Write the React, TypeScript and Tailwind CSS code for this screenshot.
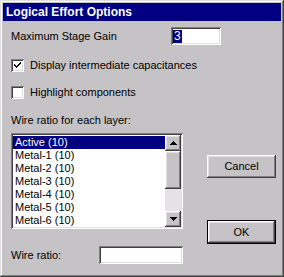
import React from "react";

const raised =
  "shadow-[inset_-1px_-1px_#404040,inset_1px_1px_#ffffff,inset_-2px_-2px_#808080,inset_2px_2px_#dfdfdf]";
const sunken =
  "shadow-[inset_1px_1px_#808080,inset_-1px_-1px_#ffffff,inset_2px_2px_#404040,inset_-2px_-2px_#dfdfdf]";

function Checkbox({ checked }: { checked?: boolean }) {
  return (
    <div className={`w-[13px] h-[13px] bg-white ${sunken} flex items-center justify-center`}>
      {checked && (
        <svg width="7" height="7" viewBox="0 0 7 7" shapeRendering="crispEdges">
          <path d="M0 2h1v1h1v1h1v-1h1v-1h1v-1h1v-1h1v2h-1v1h-1v1h-1v1h-1v1h-1v-1h-1v-1h-1z" fill="#000" />
          <path d="M0 3h1v1h1v1h1v-1h1v-1h1v-1h1v-1h1v1h-1v1h-1v1h-1v1h-1v1h-1v-1h-1v-1h-1z" fill="#000" />
        </svg>
      )}
    </div>
  );
}

function Arrow({ up }: { up?: boolean }) {
  return (
    <svg width="7" height="4" viewBox="0 0 7 4" shapeRendering="crispEdges">
      {up ? (
        <path d="M3 0h1v1h1v1h1v1h1v1h-7v-1h1v-1h1v-1h1z" fill="#000" />
      ) : (
        <path d="M0 0h7v1h-1v1h-1v1h-1v1h-1v-1h-1v-1h-1v-1h-1z" fill="#000" />
      )}
    </svg>
  );
}

const items = ["Active (10)", "Metal-1 (10)", "Metal-2 (10)", "Metal-3 (10)", "Metal-4 (10)", "Metal-5 (10)", "Metal-6 (10)"];

export default function App() {
  return (
    <div
      className="w-[284px] h-[277px] bg-[#c6c3c6] p-[3px] flex flex-col text-[11px] text-black shadow-[inset_-1px_-1px_#404040,inset_1px_1px_#dfdfdf,inset_-2px_-2px_#808080,inset_2px_2px_#ffffff]"
      style={{ fontFamily: '"Liberation Sans", Arial, sans-serif' }}
    >
      <div className="h-[18px] bg-[#000080] text-white font-bold text-[12px] leading-[18px] pl-[3px]">
        Logical Effort Options
      </div>
      <div className="flex flex-col pl-[8px]">
        <div className="flex items-center mt-[6px] h-[18px]">
          <div className="w-[160px]">Maximum Stage Gain</div>
          <div className={`w-[50px] h-[18px] bg-white ${sunken} flex items-center pl-[2px]`}>
            <span className="bg-[#000080] text-white leading-[13px] px-[1px] text-[12px]">3</span>
          </div>
        </div>
        <div className="flex items-center mt-[14px] h-[13px]">
          <Checkbox checked />
          <span className="ml-[6px]">Display intermediate capacitances</span>
        </div>
        <div className="flex items-center mt-[14px] h-[13px]">
          <Checkbox />
          <span className="ml-[6px]">Highlight components</span>
        </div>
        <div className="mt-[15px] h-[13px] leading-[13px]">Wire ratio for each layer:</div>
        <div className="flex mt-[6px]">
          <div className="flex flex-col w-[172px]">
            <div className={`w-[172px] h-[96px] bg-white ${sunken} p-[2px] flex`}>
              <div className="flex-1 flex flex-col pt-[1px]">
                {items.map((it, i) => (
                  <div
                    key={it}
                    className={`h-[13px] leading-[13px] pl-[2px] ${i === 0 ? "bg-[#000080] text-white" : ""}`}
                  >
                    {it}
                  </div>
                ))}
              </div>
              <div className="w-[16px] flex flex-col bg-[#e4e2e4]">
                <div className={`h-[16px] bg-[#c6c3c6] ${raised} flex items-center justify-center`}>
                  <Arrow up />
                </div>
                <div className={`h-[38px] bg-[#c6c3c6] ${raised}`} />
                <div className="flex-1" />
                <div className={`h-[16px] bg-[#c6c3c6] ${raised} flex items-center justify-center`}>
                  <Arrow />
                </div>
              </div>
            </div>
            <div className="flex items-center mt-[17px] h-[18px]">
              <div className="w-[88px]">Wire ratio:</div>
              <div className={`w-[84px] h-[18px] bg-white ${sunken}`} />
            </div>
          </div>
          <div className="ml-[24px] flex flex-col">
            <div className={`mt-[22px] w-[69px] h-[23px] ${raised} flex items-center justify-center`}>
              Cancel
            </div>
            <div className="mt-[42px] w-[69px] h-[24px] border border-black">
              <div className={`w-full h-full ${raised} flex items-center justify-center`}>OK</div>
            </div>
          </div>
        </div>
      </div>
    </div>
  );
}
